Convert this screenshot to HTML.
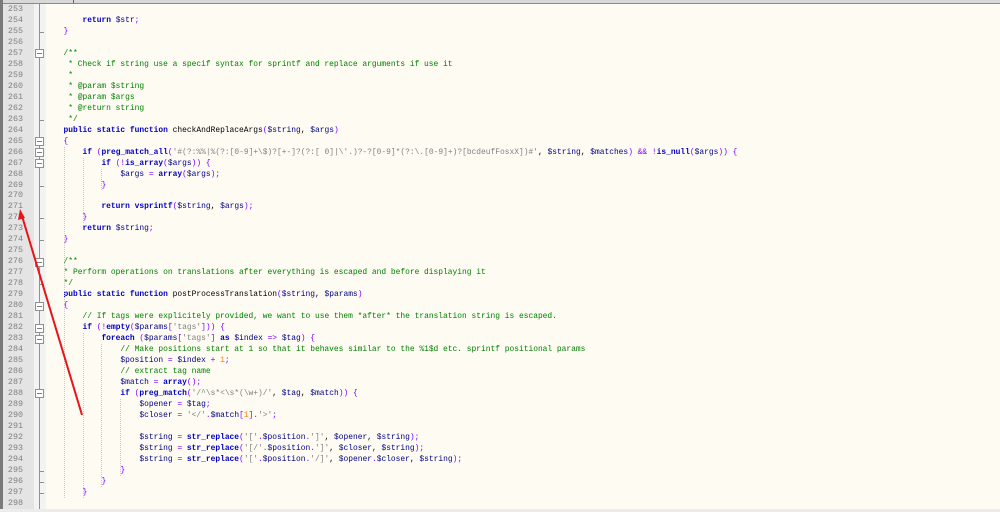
<!DOCTYPE html>
<html><head><meta charset="utf-8"><style>
body{margin:0;width:1000px;height:512px;overflow:hidden;background:#fefbf3;position:relative;font-family:"Liberation Mono",monospace;}
b{font-weight:normal}
.top{position:absolute;left:0;top:0;width:1000px;height:3px;background:#d8d8d8;border-bottom:1px solid #8a8a8a;}
.top i{position:absolute;left:73px;top:0;width:1px;height:3px;background:#666;}
.lb{position:absolute;left:0;top:0;width:3px;height:512px;background:#7a7a7a;}
.gut{position:absolute;left:3px;top:4px;width:31px;height:508px;background:#e4e4e4;}
.fold{position:absolute;left:34px;top:4px;width:12px;height:508px;background:#f3f3f3;}
.fl{position:absolute;left:39px;top:4px;width:1px;height:508px;background:#909090;}
.bot{position:absolute;left:0;top:509px;width:1000px;height:3px;background:#ececec;}
.ln{position:absolute;left:4px;width:19px;text-align:right;font-size:8.4px;color:#808080;line-height:11px;}
.cd{position:absolute;left:44.5px;font-size:7.92px;line-height:11px;white-space:pre;color:#000;}
.bx{position:absolute;left:35px;width:7px;height:7px;border:1px solid #909090;background:#fff;}
.bx:after{content:"";position:absolute;left:1px;top:3px;width:5px;height:1px;background:#808080;}
.tk{position:absolute;left:39px;width:5px;height:1px;background:#909090;}
.g{position:absolute;width:0;border-left:1px dotted #c8c8c8;}
.k{color:#0000c0;font-weight:bold}
.v{color:#000080}
.o{color:#8000ff}
.s{color:#808080}
.c{color:#008000}
.n{color:#ff8000}
</style></head><body>
<div class="top"><i></i></div>
<div class="gut"></div><div class="fold"></div><div class="fl"></div><div class="lb"></div><div class="bot"></div>
<div id="L"></div>
<svg style="position:absolute;left:0;top:0" width="1000" height="512"><line x1="82" y1="415" x2="22" y2="216" stroke="#e8141a" stroke-width="2"/><polygon points="20,209 18,220 25,218" fill="#e8141a"/></svg>
<script>
var lines=[
'',
'        <b class="k">return</b> <b class="v">$str</b><b class="o">;</b>',
'    <b class="o">}</b>',
'',
'    <b class="c">/**</b>',
'<b class="c">     * Check if string use a specif syntax for sprintf and replace arguments if use it</b>',
'<b class="c">     *</b>',
'<b class="c">     * @param $string</b>',
'<b class="c">     * @param $args</b>',
'<b class="c">     * @return string</b>',
'<b class="c">     */</b>',
'    <b class="k">public static function</b> checkAndReplaceArgs<b class="o">(</b><b class="v">$string</b>, <b class="v">$args</b><b class="o">)</b>',
'    <b class="o">{</b>',
'        <b class="k">if</b> <b class="o">(</b><b class="k">preg_match_all</b><b class="o">(</b><b class="s">\'#(?:%%|%(?:[0-9]+\\$)?[+-]?(?:[ 0]|\\\'.)?-?[0-9]*(?:\\.[0-9]+)?[bcdeufFosxX])#\'</b>, <b class="v">$string</b>, <b class="v">$matches</b><b class="o">) &amp;&amp; !</b><b class="k">is_null</b><b class="o">(</b><b class="v">$args</b><b class="o">)) {</b>',
'            <b class="k">if</b> <b class="o">(!</b><b class="k">is_array</b><b class="o">(</b><b class="v">$args</b><b class="o">)) {</b>',
'                <b class="v">$args</b> <b class="o">=</b> <b class="k">array</b><b class="o">(</b><b class="v">$args</b><b class="o">);</b>',
'            <b class="o">}</b>',
'',
'            <b class="k">return</b> <b class="k">vsprintf</b><b class="o">(</b><b class="v">$string</b>, <b class="v">$args</b><b class="o">);</b>',
'        <b class="o">}</b>',
'        <b class="k">return</b> <b class="v">$string</b><b class="o">;</b>',
'    <b class="o">}</b>',
'',
'    <b class="c">/**</b>',
'<b class="c">    * Perform operations on translations after everything is escaped and before displaying it</b>',
'<b class="c">    */</b>',
'    <b class="k">public static function</b> postProcessTranslation<b class="o">(</b><b class="v">$string</b>, <b class="v">$params</b><b class="o">)</b>',
'    <b class="o">{</b>',
'        <b class="c">// If tags were explicitely provided, we want to use them *after* the translation string is escaped.</b>',
'        <b class="k">if</b> <b class="o">(!</b><b class="k">empty</b><b class="o">(</b><b class="v">$params</b><b class="o">[</b><b class="s">\'tags\'</b><b class="o">])) {</b>',
'            <b class="k">foreach</b> <b class="o">(</b><b class="v">$params</b><b class="o">[</b><b class="s">\'tags\'</b><b class="o">]</b> <b class="k">as</b> <b class="v">$index</b> <b class="o">=&gt;</b> <b class="v">$tag</b><b class="o">) {</b>',
'                <b class="c">// Make positions start at 1 so that it behaves similar to the %1$d etc. sprintf positional params</b>',
'                <b class="v">$position</b> <b class="o">=</b> <b class="v">$index</b> <b class="o">+</b> <b class="n">1</b><b class="o">;</b>',
'                <b class="c">// extract tag name</b>',
'                <b class="v">$match</b> <b class="o">=</b> <b class="k">array</b><b class="o">();</b>',
'                <b class="k">if</b> <b class="o">(</b><b class="k">preg_match</b><b class="o">(</b><b class="s">\'/^\\s*&lt;\\s*(\\w+)/\'</b>, <b class="v">$tag</b>, <b class="v">$match</b><b class="o">)) {</b>',
'                    <b class="v">$opener</b> <b class="o">=</b> <b class="v">$tag</b><b class="o">;</b>',
'                    <b class="v">$closer</b> <b class="o">=</b> <b class="s">\'&lt;/\'</b><b class="o">.</b><b class="v">$match</b><b class="o">[</b><b class="n">1</b><b class="o">].</b><b class="s">\'&gt;\'</b><b class="o">;</b>',
'',
'                    <b class="v">$string</b> <b class="o">=</b> <b class="k">str_replace</b><b class="o">(</b><b class="s">\'[\'</b><b class="o">.</b><b class="v">$position</b><b class="o">.</b><b class="s">\']\'</b>, <b class="v">$opener</b>, <b class="v">$string</b><b class="o">);</b>',
'                    <b class="v">$string</b> <b class="o">=</b> <b class="k">str_replace</b><b class="o">(</b><b class="s">\'[/\'</b><b class="o">.</b><b class="v">$position</b><b class="o">.</b><b class="s">\']\'</b>, <b class="v">$closer</b>, <b class="v">$string</b><b class="o">);</b>',
'                    <b class="v">$string</b> <b class="o">=</b> <b class="k">str_replace</b><b class="o">(</b><b class="s">\'[\'</b><b class="o">.</b><b class="v">$position</b><b class="o">.</b><b class="s">\'/]\'</b>, <b class="v">$opener</b><b class="o">.</b><b class="v">$closer</b>, <b class="v">$string</b><b class="o">);</b>',
'                <b class="o">}</b>',
'            <b class="o">}</b>',
'        <b class="o">}</b>',
''
];
var H=10.97,T=4,h='';
function y(n){return T+(n-253)*H;}
lines.forEach(function(l,i){var t=T+i*H;
h+='<div class="ln" style="top:'+t+'px">'+(253+i)+'</div><div class="cd" style="top:'+t+'px">'+l+'</div>';});
[257,265,266,267,276,280,282,283,288].forEach(function(n){h+='<div class="bx" style="top:'+(y(n)+1.5)+'px"></div>';});
[255,263,269,272,274,278,295,296,297].forEach(function(n){h+='<div class="tk" style="top:'+(y(n)+6)+'px"></div>';});
[[64,266,298],[83,267,273],[101,268,270],[83,283,298],[101,284,297],[120,289,296]].forEach(function(g){h+='<div class="g" style="left:'+g[0]+'px;top:'+y(g[1])+'px;height:'+(y(g[2])-y(g[1]))+'px"></div>';});
document.getElementById('L').innerHTML=h;
</script>
</body></html>
